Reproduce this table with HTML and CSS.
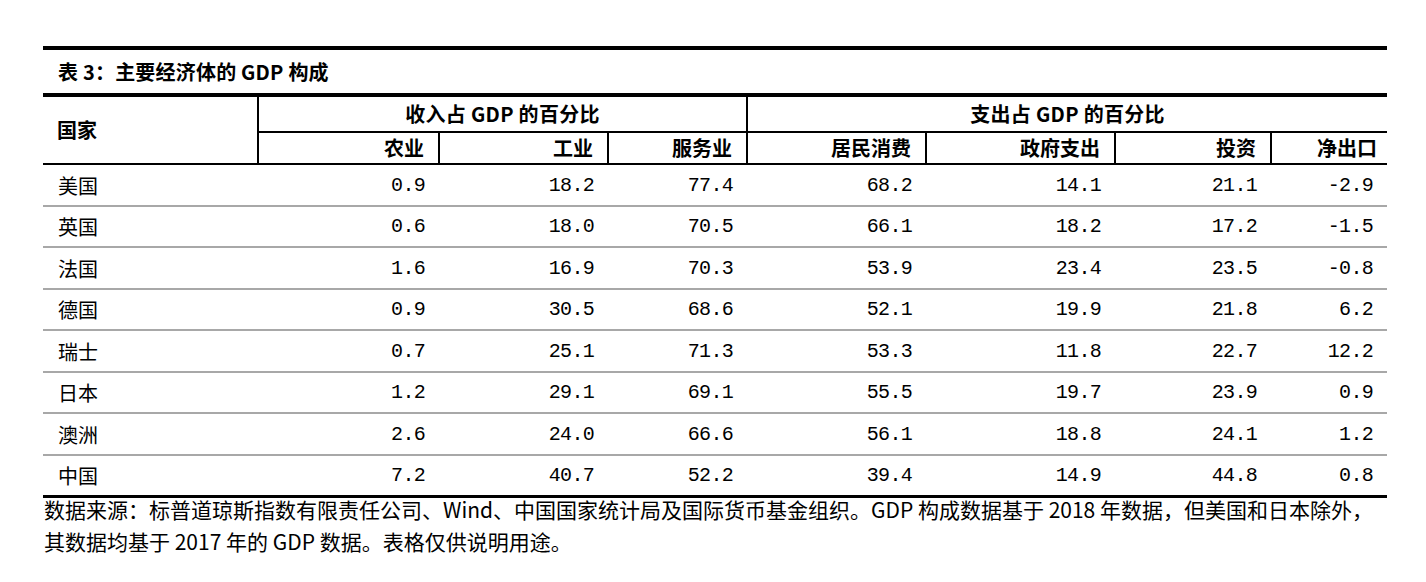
FILE: index.html
```html
<!DOCTYPE html>
<html lang="zh-CN">
<head>
<meta charset="utf-8">
<title>表 3：主要经济体的 GDP 构成</title>
<link rel="stylesheet" href="styles.css">
</head>
<body>
<div class="report">
  <div class="title">表 3：主要经济体的 GDP 构成</div>
  <table class="gdp">
    <colgroup>
      <col class="c-country">
      <col class="c-agri">
      <col class="c-ind">
      <col class="c-serv">
      <col class="c-cons">
      <col class="c-gov">
      <col class="c-inv">
      <col class="c-net">
    </colgroup>
    <thead>
      <tr class="h1">
        <th class="country-h" rowspan="2">国家</th>
        <th class="group" colspan="3">收入占 GDP 的百分比</th>
        <th class="group" colspan="4">支出占 GDP 的百分比</th>
      </tr>
      <tr class="h2">
        <th>农业</th>
        <th>工业</th>
        <th>服务业</th>
        <th>居民消费</th>
        <th>政府支出</th>
        <th>投资</th>
        <th class="last">净出口</th>
      </tr>
    </thead>
    <tbody>
      <tr><td class="name">美国</td><td>0.9</td><td>18.2</td><td>77.4</td><td>68.2</td><td>14.1</td><td>21.1</td><td>-2.9</td></tr>
      <tr><td class="name">英国</td><td>0.6</td><td>18.0</td><td>70.5</td><td>66.1</td><td>18.2</td><td>17.2</td><td>-1.5</td></tr>
      <tr><td class="name">法国</td><td>1.6</td><td>16.9</td><td>70.3</td><td>53.9</td><td>23.4</td><td>23.5</td><td>-0.8</td></tr>
      <tr><td class="name">德国</td><td>0.9</td><td>30.5</td><td>68.6</td><td>52.1</td><td>19.9</td><td>21.8</td><td>6.2</td></tr>
      <tr><td class="name">瑞士</td><td>0.7</td><td>25.1</td><td>71.3</td><td>53.3</td><td>11.8</td><td>22.7</td><td>12.2</td></tr>
      <tr><td class="name">日本</td><td>1.2</td><td>29.1</td><td>69.1</td><td>55.5</td><td>19.7</td><td>23.9</td><td>0.9</td></tr>
      <tr><td class="name">澳洲</td><td>2.6</td><td>24.0</td><td>66.6</td><td>56.1</td><td>18.8</td><td>24.1</td><td>1.2</td></tr>
      <tr><td class="name">中国</td><td>7.2</td><td>40.7</td><td>52.2</td><td>39.4</td><td>14.9</td><td>44.8</td><td>0.8</td></tr>
    </tbody>
  </table>
  <p class="note">数据来源：标普道琼斯指数有限责任公司、Wind、中国国家统计局及国际货币基金组织。GDP 构成数据基于 2018 年数据，但美国和日本除外，<br>其数据均基于 2017 年的 GDP 数据。表格仅供说明用途。</p>
</div>
</body>
</html>
```

FILE: styles.css
```css
html, body {
  margin: 0;
  padding: 0;
  background: #fff;
  color: #000;
}

body {
  font-family: "Noto Sans CJK SC", "Noto Sans", sans-serif;
}

.report {
  width: 1344px;
  padding: 46px 0 0 43px;
}

.title {
  border-top: 4px solid #000;
  height: 43px;
  box-sizing: content-box;
  display: flex;
  align-items: center;
  padding-left: 15px;
  font-size: 20px;
  font-weight: 700;
  letter-spacing: 0.2px;
}

.gdp {
  width: 1344px;
  table-layout: fixed;
  border-collapse: collapse;
  border-top: 4px solid #000;
  border-bottom: 3px solid #000;
}

.c-country { width: 215px; }
.c-agri { width: 181px; }
.c-ind { width: 169px; }
.c-serv { width: 139px; }
.c-cons { width: 179px; }
.c-gov { width: 189px; }
.c-inv { width: 156px; }
.c-net { width: 116px; }

.gdp th {
  font-size: 20px;
  font-weight: 700;
  padding: 0 14px 0 0;
  line-height: 24px;
}

.gdp .h1 th {
  height: 34px;
  border-bottom: 2px solid #000;
}

.gdp .h1 .group {
  text-align: center;
  border-left: 2px solid #000;
  padding: 0;
  letter-spacing: 0.3px;
}

.gdp .country-h {
  text-align: left;
  padding-left: 14px;
  border-bottom: 2px solid #000;
  border-right: 2px solid #000;
}

.gdp .h2 th {
  height: 30px;
  text-align: right;
  border-left: 2px solid #000;
  border-bottom: 2px solid #000;
}

.gdp .h2 .last {
  padding-right: 10px;
}

.gdp td {
  height: 37.5px;
  padding: 2px 14px 0 0;
  text-align: right;
  font-family: "Liberation Mono", monospace;
  font-size: 20px;
  letter-spacing: -0.7px;
  line-height: 24px;
  border-bottom: 2px solid #a8a8a8;
}

.gdp tbody tr:last-child td {
  border-bottom: 3px solid #000;
}

.gdp td.name {
  text-align: left;
  padding-left: 15px;
  font-family: "Noto Sans CJK SC", sans-serif;
  font-size: 20px;
  letter-spacing: 0;
}

.note {
  margin: -5px 0 0 1px;
  font-size: 21px;
  line-height: 32px;
  white-space: nowrap;
}
```
